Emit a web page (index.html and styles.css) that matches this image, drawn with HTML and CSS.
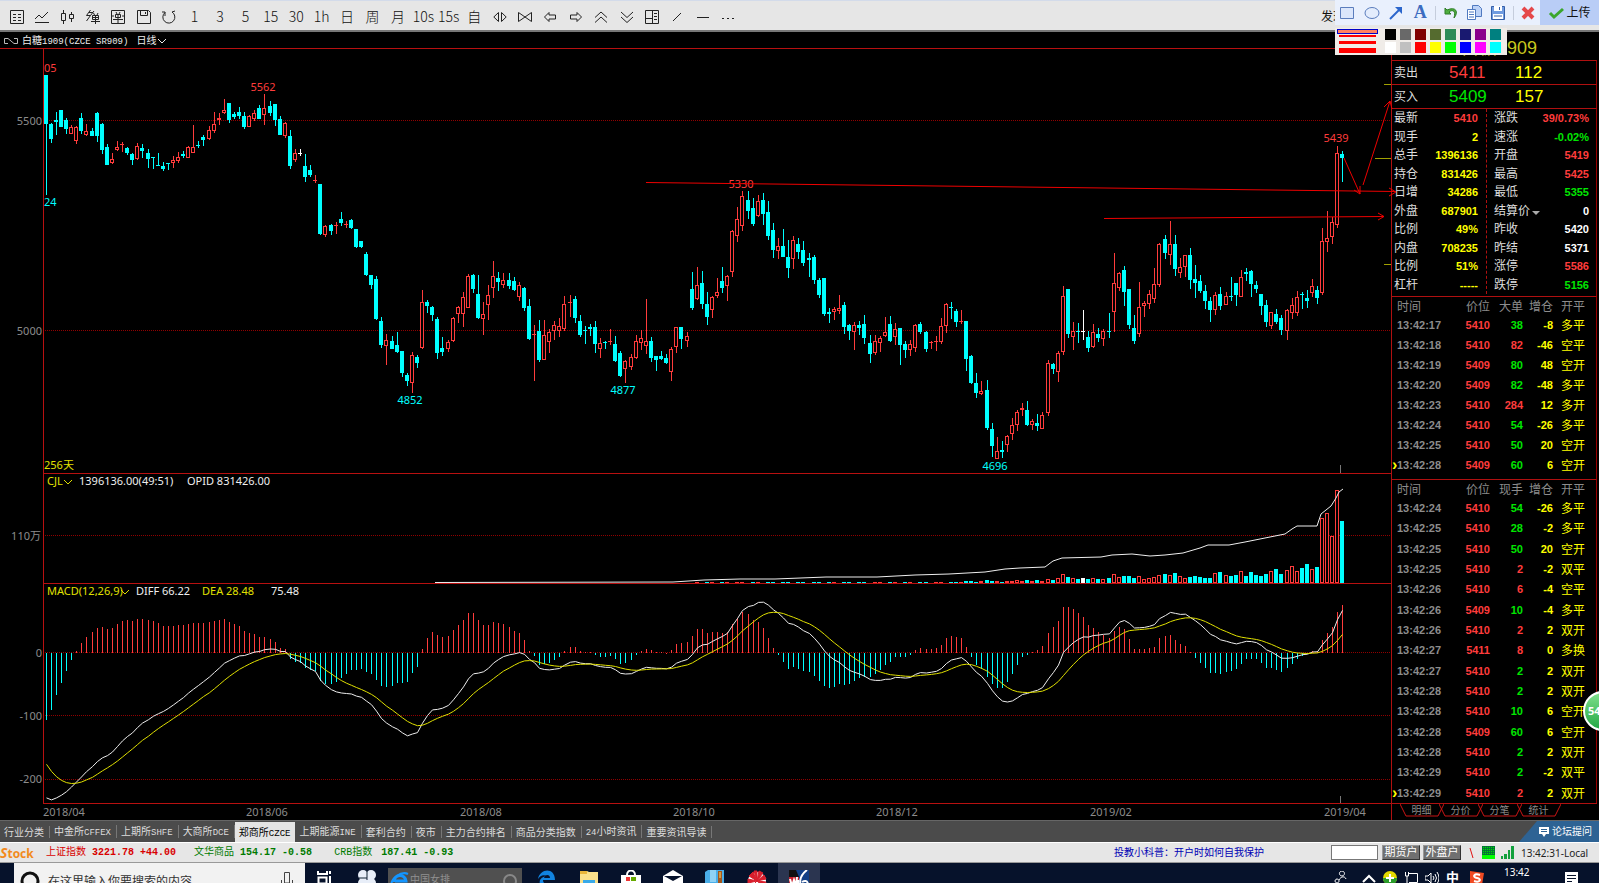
FILE: index.html
```html
<!DOCTYPE html>
<html lang="zh-CN">
<head>
<meta charset="utf-8">
<title>白糖1909 日线</title>
<link rel="stylesheet" href="styles.css">
</head>
<body>
<header class="toolbar">
  <div class="tools">
    <button aria-label="报价"><svg viewBox="0 0 14 14"><path d="M.5 .5h13v13H.5zM3 4.500h3M8 4.500h3M3 7.500h3M8 7.500h3M3 10.500h3M8 10.500h3"/></svg></button>
    <button aria-label="分时"><svg viewBox="0 0 14 14"><path d="M0 9l4-4 3 3 6-6M0 12.500h14"/></svg></button>
    <button aria-label="K线"><svg viewBox="0 0 14 14"><path d="M.5 3.500h4v7h-4zM2.500 0v3M2.500 11v3M8.500 4.500h4v4h-4zM10.500 2v2M10.500 9v3"/></svg></button>
    <button aria-label="闪单"><svg viewBox="0 0 14 14"><path d="M4.500 0L.5 5.500h4L.5 11M3 2.500h4M4.500 5.500L8 1M6.500 5.500h6v4h-6zM6.500 7.500h6M5 11.500h9M9.500 5v9M7.500 3l1 2M12 3l-1 2"/></svg></button>
    <button aria-label="下单"><svg viewBox="0 0 14 14"><path d="M.5 .5h13v13H.5zM4.500 4.500h5v3h-5zM2 9.500h10M7 4v9M5 2l1 2M9 2L8 4M0 6h3M11 6h3"/></svg></button>
    <button aria-label="保存"><svg viewBox="0 0 14 14"><path d="M.5 .5h11l2 2v11H.5zM3.500 .5v5h7v-5M8.500 2v2"/></svg></button>
    <button aria-label="刷新"><svg viewBox="0 0 14 14"><path d="M3 2.500a6 6 0 1 0 7-.5M3 6V2H0M10 2l3-1"/></svg></button>
    <button>1</button><button>3</button><button>5</button><button>15</button><button>30</button><button>1h</button>
    <button>日</button><button>周</button><button>月</button><button>10s</button><button>15s</button><button>自</button>
    <button aria-label="拉伸"><svg viewBox="0 0 14 14"><path d="M5.500 2.500v9L.8 7zM8.500 2.500v9L13.200 7z"/></svg></button>
    <button aria-label="压缩"><svg viewBox="0 0 14 14"><path d="M.5 2.500v9L7 7zM13.500 2.500v9L7 7z"/></svg></button>
    <button aria-label="左移"><svg viewBox="0 0 14 14"><path d="M1.500 7L6 2.500V5h6.500v4H6v2.500z"/></svg></button>
    <button aria-label="右移"><svg viewBox="0 0 14 14"><path d="M12.500 7L8 2.500V5H1.500v4H8v2.500z"/></svg></button>
    <button aria-label="上翻"><svg viewBox="0 0 14 14"><path d="M1 7.500L7 2l6 5.500M1 12.500L7 7l6 5.500"/></svg></button>
    <button aria-label="下翻"><svg viewBox="0 0 14 14"><path d="M1 2l6 5.500L13 2M1 7l6 5.500L13 7"/></svg></button>
    <button aria-label="布局"><svg viewBox="0 0 14 14"><path d="M.5 .5h13v13H.5zM7.500 .5v13M.5 8.500h7M9 3.500h3M9 6.500h3M9 9.500h3"/></svg></button>
    <button aria-label="斜线"><svg viewBox="0 0 14 14"><path d="M3 11l8-8"/></svg></button>
    <button aria-label="横线"><svg viewBox="0 0 14 14"><path d="M1 7.500h12"/></svg></button>
    <button aria-label="更多"><svg viewBox="0 0 14 14"><path d="M1 8.500h2M6 8.500h2M11 8.500h2"/></svg></button>
  </div>
  <a class="discover" href="#">发现</a>
</header>

<main class="workspace">
  <section class="chart">
    <div class="chart-title">
      <svg class="link-icon" viewBox="0 0 14 8"><path d="M4 1.500H.5v5H4M10 1.500h3.500v5H10M4 1.500l6 5"/></svg>
      <span>白糖<i>1909(CZCE SR909)</i></span>
      <button>日线<svg class="caret" viewBox="0 0 8 6"><path d="M0 1l4 4 4-4"/></svg></button>
    </div>
    <svg id="plot" class="plot" viewBox="0 48 1391 772" role="img" aria-label="白糖1909 日K线"></svg>
  </section>

  <aside class="quote">
    <div class="contract">白糖1909</div>
    <div class="bidask"><span>卖出</span><b class="r">5411</b><b class="y">112</b></div>
    <div class="bidask"><span>买入</span><b class="g">5409</b><b class="y">157</b></div>
    <div class="stats">
      <dl id="statsLeft"></dl>
      <dl id="statsRight"></dl>
    </div>
    <div class="ticks recent"><table class="tick-table big" id="bigTicks"></table></div>
    <div class="ticks"><table class="tick-table all" id="allTicks"></table></div>
    <nav class="quote-tabs">
      <button><svg viewBox="0 0 44 13"><path d="M0 0l6 12h32l6-12"/></svg>明细</button>
      <button><svg viewBox="0 0 44 13"><path d="M0 0l6 12h32l6-12"/></svg>分价</button>
      <button><svg viewBox="0 0 44 13"><path d="M0 0l6 12h32l6-12"/></svg>分笔</button>
      <button><svg viewBox="0 0 44 13"><path d="M0 0l6 12h32l6-12"/></svg>统计</button>
    </nav>
  </aside>
</main>

<nav class="markets">
  <a href="#">行业分类</a><a href="#">中金所<i>CFFEX</i></a><a href="#">上期所<i>SHFE</i></a><a href="#">大商所<i>DCE</i></a><a href="#" class="active">郑商所<i>CZCE</i></a><a href="#">上期能源<i>INE</i></a><a href="#">套利合约</a><a href="#">夜市</a><a href="#">主力合约排名</a><a href="#">商品分类指数</a><a href="#"><i>24</i>小时资讯</a><a href="#">重要资讯导读</a>
  <button class="forum"><svg viewBox="0 0 10 10"><path d="M0 0h10v7H7l-2 3-2-3H0z" fill="#fff"/><path d="M2 2.500h6M2 4.500h6" stroke="#2e6394"/></svg>论坛提问</button>
</nav>

<div class="status">
  <span class="brand"><em>S</em>tock</span>
  <span class="index up">上证指数 <b>3221.78</b> <b>+44.00</b></span>
  <span class="index down">文华商品 <b>154.17</b> <b>-0.58</b></span>
  <span class="index down wide"><span>CRB指数</span><b>187.41</b> <b>-0.93</b></span>
  <a class="notice" href="#">投教小科普：开户时如何自我保护</a>
  <input type="text" aria-label="合约代码">
  <button>期货户</button>
  <button>外盘户</button>
  <svg class="slash" viewBox="0 0 5 10"><path d="M1 0l3 10"/></svg>
  <svg class="board" viewBox="0 0 13 13"><path d="M0 0h13v10H0z" fill="#073"/><path d="M1 1.500h11M1 3.500h11M1 5.500h11M1 7.500h11" stroke="#0d0" stroke-dasharray="1 1"/><path d="M0 9h13v4H0z" fill="#0f0"/></svg>
  <svg class="signal" viewBox="0 0 13 13"><path d="M0 10h2v3H0zM3 8h3v5H3zM7 4h2v9H7zM10 0h3v13h-3z" fill="#12a03c"/></svg>
  <time>13:42:31-Local</time>
</div>

<footer class="taskbar">
  <div class="search">
    <svg viewBox="0 0 20 20"><circle cx="10" cy="10" r="8" fill="none" stroke="#111" stroke-width="3"/></svg>
    <label for="find">在这里输入你要搜索的内容</label>
    <input id="find" type="text">
    <svg class="mic" viewBox="0 0 12 20"><path d="M3.500 12V1.500h5V12zM.5 9v5h11V9" fill="none" stroke="#444"/></svg>
  </div>
  <div class="apps">
    <button aria-label="任务视图"><svg viewBox="0 0 20 20"><path d="M3 1v3h9V1M3.500 7.500h8v6h-8zM15 1v3M15 6v8" fill="none" stroke="#fff" stroke-width="2"/></svg></button>
    <button aria-label="花瓣"><svg viewBox="0 0 20 20"><g fill="#e8eef8"><circle cx="6" cy="5" r="5"/><circle cx="14" cy="5" r="5"/><circle cx="6" cy="13" r="5"/><circle cx="14" cy="13" r="5"/></g><path d="M10 0v8H2" fill="none" stroke="#123"/></svg></button>
    <div class="ie">
      <svg viewBox="0 0 20 20"><path d="M4 12a6 6 0 1 1 12-1H5" fill="none" stroke="#1496ff" stroke-width="3"/><path d="M2 17C-1 8 12 1 18 4" fill="none" stroke="#1496ff" stroke-width="2"/></svg>
      <span>中国女排</span>
      <svg viewBox="0 0 20 20"><circle cx="10" cy="11" r="6" fill="none" stroke="#888" stroke-width="2"/></svg>
    </div>
    <button aria-label="Edge"><svg viewBox="0 0 20 20"><path d="M1 9C3-2 18-3 18 10H6c0 5 6 6 11 3v4C8 22 1 17 3 10c2-3 5-4 7-4-4-2-7 0-9 3z" fill="#1183e0"/><path d="M7 8h6c0-4-5-4-6 0z" fill="#06122b"/></svg></button>
    <button aria-label="文件"><svg viewBox="0 0 20 20"><path d="M1 1h7l2 1h9v16H1z" fill="#fbe08a"/><path d="M1 1h7v3H1z" fill="#e9b53a"/><path d="M4 10h12v8H4z" fill="#39a9e8"/></svg></button>
    <button aria-label="商店"><svg viewBox="0 0 20 20"><path d="M6 5c0-6 8-6 8 0" fill="none" stroke="#fff" stroke-width="2"/><path d="M0 5h20v15H0z" fill="#fff"/><path d="M5 7h4v4H5z" fill="#e33"/><path d="M10 7h5v4h-5z" fill="#6a0"/></svg></button>
    <button aria-label="邮件"><svg viewBox="0 0 20 20"><path d="M0 6l10-6 10 6v12H0z" fill="#fff"/><path d="M1 6h18l-9 5z" fill="#06122b"/></svg></button>
    <button aria-label="压缩包"><svg viewBox="0 0 20 20"><path d="M0 2l3-2h16v20H0z" fill="#4aaee8"/><path d="M5 0h6v12H5z" fill="#8fd2f5"/><path d="M13 1h4v19h-4z" fill="#a5571b"/><path d="M15 2v6" stroke="#fd6"/></svg></button>
    <button aria-label="行情"><svg viewBox="0 0 20 20"><circle cx="10" cy="11" r="9" fill="#fff"/><path d="M10 11L2 6l4-4zM10 11L7 1l3 0zM10 11l2-10 4 2zM10 11l7-6 2 4zM10 11L1 9v4zM10 11l9 1-2 5zM10 11l-7 7" fill="#d81e2c" stroke="#d81e2c"/></svg></button>
    <button class="running" aria-label="wh6"><svg viewBox="0 0 20 20"><path d="M0 0h20v20H0z" fill="#123f86"/><path d="M0 0h7l3 7H0z" fill="#111"/><path d="M0 7h10v13H0z" fill="#c8202c"/><path d="M18 0c-8 6-9 16-3 16s4-8-2-4M1 9l2 7 2-6 2 6 1-9M9 10v8" fill="none" stroke="#fff" stroke-width="2"/></svg></button>
  </div>
  <div class="tray">
    <svg class="people" viewBox="0 0 14 14"><path d="M9 5a2.500 2.500 0 1 0-.1 0M4 8a2 2 0 1 0 .1 0M6 9c2-4 6-4 7-1" fill="none" stroke="#fff"/></svg>
    <svg viewBox="0 0 14 14"><path d="M1 11l6-6 6 6" fill="none" stroke="#fff" stroke-width="2"/></svg>
    <svg viewBox="0 0 14 14"><circle cx="7" cy="7" r="7" fill="#e3d900"/><path d="M0 7a7 7 0 0 0 14 0z" fill="#2a9c2a"/><path d="M7 3v8M3 7h8" stroke="#fff" stroke-width="2"/></svg>
    <svg viewBox="0 0 14 14"><path d="M5 2.500h8.500v9H5M1.500 1v4h3V1M3 5v8" fill="none" stroke="#fff"/></svg>
    <svg viewBox="0 0 14 14"><path d="M0 5h3l3-3v10l-3-3H0zM8 5q2 2 0 4M10 3q3 4 0 8M12 1q4 6 0 12" fill="none" stroke="#fff"/></svg>
    <span>中</span>
    <svg class="ime" viewBox="0 0 14 14"><path d="M0 0l14 2-2 12H0z" fill="#f04a22"/><path d="M10 4C4 2 2 6 7 7s3 5-3 3" fill="none" stroke="#fff" stroke-width="2"/></svg>
    <time>13:42</time>
    <svg class="notes" viewBox="0 0 16 16"><path d="M1 1h13v12H9l-3 3v-3H1z" fill="#fff"/><path d="M3 4.500h9M3 7.500h9M3 10.500h5" stroke="#06122b"/></svg>
  </div>
</footer>

<div class="snip">
  <div class="snip-tools">
    <button aria-label="矩形"><svg viewBox="0 0 16 16"><path d="M1.500 2.500h13v11h-13z" fill="#dbe6fb" stroke="#5b7dbd"/></svg></button>
    <button aria-label="椭圆"><svg viewBox="0 0 16 16"><ellipse cx="8" cy="8" rx="7" ry="5.500" fill="#e3ecfc" stroke="#5b7dbd"/></svg></button>
    <button aria-label="箭头"><svg viewBox="0 0 16 16"><path d="M2 14L13 3" stroke="#2c66cc" stroke-width="2"/><path d="M7 2h7v7z" fill="#2c66cc"/></svg></button>
    <button class="letter">A</button>
    <hr>
    <button aria-label="撤销"><svg viewBox="0 0 16 16"><path d="M3 3v6h6L7 7c4-3 7-1 5 6 5-6 2-12-7-8z" fill="#4fae3f" stroke="#2d7d26"/></svg></button>
    <button aria-label="复制"><svg viewBox="0 0 16 16"><path d="M6.500 .5h6l3 3v8h-9z" fill="#bcd2f7" stroke="#4f79c0"/><path d="M1.500 4.500h8v10h-8zM3 7h5M3 9.500h5M3 12h5" fill="#fff" stroke="#4f79c0"/></svg></button>
    <button aria-label="保存图片"><svg viewBox="0 0 16 16"><path d="M1.500 1.500h13v13h-13z" fill="#6f9be0" stroke="#355fa8"/><path d="M4 1h8v5H4zM3 9h10v5H3z" fill="#fff"/><path d="M4 11h8M9.500 2v3" stroke="#355fa8"/></svg></button>
    <hr>
    <button aria-label="关闭"><svg viewBox="0 0 16 16"><path d="M3 3l10 10M13 3L3 13" stroke="#e5484a" stroke-width="4"/></svg></button>
    <button class="upload"><svg viewBox="0 0 16 16"><path d="M2 8l4 4 9-8" fill="none" stroke="#3ba62d" stroke-width="3"/></svg>上传</button>
  </div>
  <div class="palette">
    <div class="weights"><button class="w1 on" aria-label="1"></button><button class="w2" aria-label="2"></button><button class="w3" aria-label="3"></button><button class="w4" aria-label="4"></button></div>
    <div class="swatches" id="swatches"></div>
  </div>
</div>
<div class="badge">54</div>
<script src="app.js"></script>
</body>
</html>
```
FILE: styles.css
```css
* { box-sizing: border-box; }
body {
  margin: 0;
  height: 100vh;
  overflow: hidden;
  position: relative;
  display: flex;
  flex-direction: column;
  background: #000;
  color: #ddd;
  font: 12px/16px "Liberation Sans", "Noto Sans CJK SC", sans-serif;
}
button { border: 0; padding: 0; background: none; color: inherit; font: inherit; }
a { color: inherit; text-decoration: none; }
svg { display: block; flex: none; }

.toolbar {
  display: flex;
  justify-content: space-between;
  align-items: center;
  flex: none;
  height: 32px;
  padding: 2px 0 0 4px;
  border-top: 1px solid #d3dbea;
  border-bottom: 2px solid #777;
  background: #e6e6e6;
  color: #111;
}
.tools { display: grid; grid-template-columns: repeat(29, 1fr); width: 737px; }
.tools button { display: flex; justify-content: center; align-items: center; height: 27px; font: 14px/27px "Noto Sans CJK SC", sans-serif; font-weight: 300; }
.tools svg { width: 14px; height: 14px; fill: none; stroke: #222; }
.discover { margin-right: 254px; }

.workspace { display: flex; flex: none; align-items: flex-start; }
.chart { flex: 1; min-width: 0; }
.chart-title { display: flex; align-items: center; gap: 4px; height: 16px; padding: 2px 0 0 4px; font-size: 10px; line-height: 14px; color: #eee; }
.chart-title i { font: 9px "Liberation Mono", monospace; }
.chart-title button { display: flex; align-items: center; gap: 2px; margin-left: 4px; }
.link-icon { width: 14px; height: 8px; fill: none; stroke: #bbb; }
.caret { width: 8px; height: 6px; fill: none; stroke: #eee; }
.plot { width: 100%; height: auto; overflow: visible; position: relative; z-index: 1; }
.plot text { font: 11px "Noto Sans", "Noto Sans CJK SC", sans-serif; }

.quote { width: 208px; height: 788px; padding-right: 2px; border-left: 1px solid #b01010; }
.contract { height: 28px; padding-right: 60px; text-align: right; font-size: 18px; line-height: 32px; color: #c8c81e; }
.bidask { display: grid; grid-template-columns: 55px 66px 1fr; align-items: center; width: 205px; height: 24px; padding-left: 2px; border-top: 1px solid #b01010; border-right: 1px solid #900; line-height: 24px; }
.bidask b { font-weight: normal; font-size: 17px; }
.r { color: #ff3c3c; }
.g { color: #00e600; }
.y { color: #ffff00; }
.w { color: #fff; }
.n { color: #8c8c8c; }
.stats { display: grid; grid-template-columns: 95px 1fr; width: 205px; height: 188px; padding-bottom: 2px; border-top: 1px solid #b01010; border-right: 1px solid #900; }
.stats dl { display: grid; grid-auto-rows: 1fr; margin: 0; padding: 0 8px 0 2px; border-right: 1px dashed #b01010; }
.stats dl + dl { padding: 0 7px; border: 0; }
.stats div { display: flex; justify-content: space-between; align-items: center; }
.stats dd { margin: 0; font-weight: bold; font-size: 11px; }
.drop { display: inline-block; margin-left: 2px; border: 4px solid transparent; border-top-color: #aaa; border-bottom: 0; }
.ticks { width: 205px; border-top: 1px solid #b01010; border-right: 1px solid #900; }
.recent { padding-bottom: 4px; }
.tick-table { width: 188px; margin-left: 5px; table-layout: fixed; border-spacing: 0; font-size: 11px; font-weight: bold; }
.big { height: 178px; }
.all { height: 323px; }
.tick-table th, .tick-table td { padding: 0; text-align: right; white-space: nowrap; line-height: 16px; }
.tick-table th { height: 18px; font: 12px/16px "Noto Sans CJK SC", sans-serif; color: #8c8c8c; }
.tick-table th:first-child, .tick-table td:first-child { width: 46px; text-align: left; position: relative; }
.tick-table th:nth-child(2) { width: 47px; }
.tick-table th:nth-child(3) { width: 33px; }
.tick-table th:nth-child(4) { width: 30px; }
.tick-table td:last-child { font: 12px/16px "Noto Sans CJK SC", sans-serif; }
.current td:first-child::before { content: "›"; position: absolute; left: -5px; color: #ff0; font-size: 16px; line-height: 15px; }
.quote-tabs { display: flex; width: 205px; padding-left: 10px; border-top: 1px solid #b01010; }
.quote-tabs button { position: relative; width: 39px; height: 14px; color: #8c8c8c; font-size: 10px; line-height: 14px; }
.quote-tabs svg { position: absolute; left: -2px; top: 0; width: 44px; height: 13px; fill: none; stroke: #c81414; }

.markets { display: flex; flex: none; height: 22px; align-items: center; border-top: 1px solid #666; background: #4b4b4b; color: #ddd; font-size: 10px; line-height: 20px; }
.markets a { padding: 1px 5px 0 4px; border-right: 1px solid #777; line-height: 11px; white-space: nowrap; }
.markets a.active { border: 0; background: #e4e4e4; color: #000; line-height: 19px; }
.markets i { font: 9px "Liberation Mono", monospace; }
.forum { display: flex; align-items: center; gap: 3px; height: 21px; margin-left: auto; padding: 0 7px 0 20px; background: #2e6394; color: #fff; clip-path: polygon(18px 0, 100% 0, 100% 100%, 0 100%); }
.forum svg { width: 10px; height: 10px; }

.status { display: flex; flex: none; align-items: center; height: 21px; padding-right: 8px; border-top: 1px solid #fff; border-bottom: 1px solid #999; background: #e6e6e6; font-size: 10px; white-space: nowrap; }
.brand { width: 46px; color: #f28a1c; font: bold 12px "Open Sans", sans-serif; }
.brand em { font-size: 14px; }
.index { font-family: "Liberation Mono", "Noto Sans CJK SC", monospace; margin-right: 18px; }
.wide { margin-left: 4px; }
.wide span { margin-right: 9px; }
.up { color: #d80000; }
.down { color: #007a00; }
.notice { margin-left: auto; margin-right: 67px; color: #0000b4; }
.status input { width: 47px; height: 15px; border: 1px solid #777; background: #fff; }
.status button { width: 38px; height: 15px; margin-left: 4px; border: 1px solid #999; border-right-color: #333; border-bottom-color: #333; background: #707070; color: #fff; font-size: 11px; line-height: 13px; }
.status button + button { margin-left: 3px; }
.slash { width: 5px; height: 10px; margin-left: 8px; stroke: #e01010; }
.board { width: 13px; height: 13px; margin-left: 8px; }
.signal { width: 13px; height: 13px; margin-left: 6px; }
.status time { width: 77px; padding-left: 7px; color: #222; font: 10px "Noto Sans", sans-serif; }

.taskbar { display: flex; flex: 1; min-height: 20px; overflow: hidden; align-items: flex-start; background: #06122b; color: #fff; }
.search { display: flex; align-items: flex-start; width: 291px; height: 40px; margin-left: 14px; padding: 8px 12px 0 6px; background: #f2f2f2; color: #333; }
.search > svg:first-child { width: 20px; height: 20px; }
.search label { padding-left: 8px; line-height: 22px; }
.search input { flex: 1; min-width: 0; height: 20px; border: 0; background: none; }
.search .mic { width: 12px; height: 20px; }
.apps { display: flex; }
.apps button, .ie { height: 40px; padding: 7px 11px 0; }
.apps button { display: flex; align-items: flex-start; }
.apps svg { width: 20px; height: 20px; }
.apps button:first-child { margin-left: -1px; }
.ie { display: flex; width: 134px; height: 35px; margin: 5px 4px 0 0; padding: 2px 2px 0; background: #505050; color: #909090; font-size: 10px; line-height: 19px; }
.ie span { flex: 1; }
.apps .running { background: #2b3550; }
.tray { display: flex; margin-left: auto; gap: 7px; padding: 8px 19px 0 0; }
.tray svg { width: 14px; height: 14px; }
.tray .people { margin-right: 8px; }
.tray .ime { margin-left: 3px; }
.tray span { width: 14px; font-size: 13px; font-weight: bold; line-height: 13px; }
.tray time { width: 46px; margin-top: -7px; padding-left: 13px; font: 10px/16px "Noto Sans", sans-serif; }
.tray .notes { width: 16px; height: 16px; margin-left: 20px; }

.snip { position: absolute; top: 0; right: 0; width: 264px; z-index: 3; }
.snip-tools { display: flex; align-items: center; height: 25px; background: #e9f0fd; }
.snip-tools button { display: flex; justify-content: center; align-items: center; width: 25px; height: 25px; }
.snip-tools svg { width: 16px; height: 16px; }
.snip-tools hr { width: 1px; height: 14px; margin: 0 2px; border: 0; background: #c5cddc; }
.snip-tools .letter { font: bold 18px "Liberation Serif", serif; color: #3c6cc0; }
.snip-tools .upload { flex: none; width: 59px; margin-left: auto; gap: 2px; background: #b9cdf6; color: #111; }
.palette { display: flex; width: 172px; height: 27px; margin-top: 3px; background: #f0ece8; }
.weights { display: flex; flex-direction: column; width: 41px; margin-left: 2px; }
.weights button { padding: 0 2px; background: red; background-clip: content-box; }
.weights .w1 { height: 5px; margin-top: 1px; padding: 1px; border: 1px solid #0000c8; background-color: #ff8060; background-clip: padding-box; }
.weights .w2 { height: 2px; margin-top: 1px; }
.weights .w3 { height: 3px; margin-top: 4px; }
.weights .w4 { height: 5px; margin-top: 4px; }
.swatches { display: grid; grid-template-columns: repeat(8, 11px); gap: 2px 4px; margin: 1px 0 0 7px; align-content: start; }
.swatches button { height: 11px; background: var(--ink); }

.badge { position: absolute; right: -24px; top: 691px; width: 40px; height: 40px; padding-left: 3px; border: 2px solid #fff; border-radius: 50%; background: linear-gradient(#7fe08c, #23a845); color: #fff; font: bold 11px/36px "Open Sans", sans-serif; z-index: 3; }
```
FILE: app.js
```js
// Candles: colour, high, low, body top, body bottom, in thirds of a pixel, per block offset.
const blocks = [
[0, `C226 585 226 374;C370 430 372 416;C336 405 361 368;C330 382 330 381;C354 402 360 388;R376 402 382 402;R378 431 381 424;C340 402 354 394;R372 408 394 407;C384 408 392 406;C336 425 338 408;C370 462 372 450;C432 495 442 495;R458 490 477 489;R424 455 440 448;R427 458 433 437;C441 465 443 458;C460 495 462 480;R430 480 439 478;C432 473 444 452;C448 506 458 477;C470 506 470 474;C460 498 494 498;C486 512 498 507;C488 510 490 494;R468 503 480 488;R455 488 472 485;C453 474 463 468;R438 475 440 472;R376 460 440 458;C422 444 434 438;C405 438 411 421;R378 420 390 418;R336 398 372 392;R340 375 355 360;R297 342 331 341;C308 368 310 360;C336 356 342 351;C322 358 336 348;C336 388 348 381;R345 382 348 380;R330 362 339 356;C316 356 324 356;R282 376 324 344;C304 348 318 340;C311 376 312 360;C348 406 356 405;R365 412 370 410;C390 507 409 500;R448 486 460 480;W448 470 459 462;C462 546 498 531;C495 530 510 525;R525 550 540 544;C551 705 552 703;R674 710 679 706;C672 705 674 692;R666 703 674 678;C636 678 656 668;R664 686 672 676;C656 685 660 684`],
[570, `C117 175 117 171;C152 174 153 171;C186 258 192 255;C255 297 256 285;C258 390 267 387;C380 473 394 465;R432 525 451 469;C438 478 452 476;C426 490 465 486;C483 560 484 551;C550 588 556 575;R485 609 495 580;C495 534 502 521;R300 476 336 473;C330 369 336 348;C348 393 350 375;C381 507 388 489;C441 498 475 486;R450 486 455 477;R381 456 384 454;R348 399 351 373;R306 411 322 373;R252 354 258 353;C252 309 254 297;C255 387 312 385;R336 435 373 387;R285 390 316 346;R213 324 259 296;C246 302 264 276`],
[510, `R309 354 331 346;C309 357 331 348;C321 363 333 360;R336 393 346 382;C352 423 354 414;C387 510 408 507;R465 632 492 496;C450 576 482 570;R450 570 495 570;R477 549 487 518;R453 510 466 483;R444 501 469 483;R379 483 403 477;R375 441 396 399;C379 460 387 444;C435 502 453 495;C468 522 479 483;C462 498 471 476;C453 550 471 522;R504 564 519 537;C513 538 515 519;R477 525 512 516;C498 576 522 573;C543 620 550 620;R570 639 573 597;R552 600 561 590;R495 567 513 563;R479 540 504 518;R387 552 513 528;C501 576 513 564;C558 603 558 570;C543 570 559 567;C552 581 564 580;R531 634 538 608;R471 550 472 533;C471 537 472 507;R486 531 499 514;C306 420 357 414;R291 390 346 389;C303 417 339 402;C366 466 402 441;R378 445 381 419;R324 384 367 380;C291 369 333 354;R315 393 319 350;R180 320 184 308;R111 216 148 198;R64 183 78 167;C64 147 90 123;C84 167 115 162;R75 142 94 140;C69 165 90 132;C94 210 126 198;C160 264 180 240;R204 267 228 242;C178 262 228 261;C210 324 261 294;R198 297 210 266;C204 267 222 246;C213 288 240 278;C249 321 265 270;C255 342 261 330;C324 384 330 375;C324 437 324 432;C414 459 426 432;R411 450 417 426;R375 432 414 422;C396 492 405 471;C462 510 465 483;R456 540 465 486;C453 495 465 474;C435 522 462 504;C495 579 519 552;R495 555 514 550;R498 547 504 518;R441 501 486 498;C438 516 462 514;R459 525 477 501;C474 585 474 525;C513 563 522 540;R510 558 522 540;R462 546 465 533;C456 492 462 486;C483 545 486 537;R513 537 515 519;R498 543 513 516;R444 522 468 515;R399 489 402 467;C396 447 410 414;C417 471 423 456;R420 462 452 456;C453 603 453 567;C555 642 558 639;C609 685 640 669;R633 675 663 671;C630 780 660 774;C759 861 777 828;R801 868 843 867;C813 864 840 846;R795 846 798 825;R744 810 766 792;R720 783 726 765;R699 738 715 722;C693 768 720 766;R747 780 753 765;C732 783 759 768;R726 777 735 776;R570 737 580 731;C579 612 583 598;R543 636 549 605;R348 555 378 546;C357 504 357 492;R456 540 483 500;C459 519 483 487;W420 510 483 486;C483 546 500 534;R462 533 486 531;C474 516 492 504;R477 528 484 507;C429 504 482 486;R249 486 339 426;R306 362 309 353;C288 408 300 366;C357 477 357 465;C435 522 474 514;R336 501 411 491;R393 441 398 407;R360 417 373 404;R294 399 343 389;R219 350 222 344;C195 267 207 249;R153 285 222 254;C195 318 222 297;R264 324 291 308;R255 320 256 293;C234 357 255 330;C285 384 327 339;C315 369 333 363;C345 417 363 393;C381 456 393 420;R366 435 375 419;C351 420 372 408;R366 405 378 404;C321 393 378 381;C339 408 340 377;R300 381 321 380;C294 333 306 312;C300 381 303 342;C333 370 345 357;C372 435 373 408;C390 471 405 456;R426 477 426 467;C417 462 432 456;C435 495 444 480;R417 510 421 483;R384 447 405 429;R363 438 381 430;C366 417 372 376;C360 414 383 392;R327 381 347 367;C348 402 360 384;R174 374 213 369;R123 246 205 218;R140 222 157 203;R-72 174 -50 165;C-57 36 -48 -36`]
];
const candles = blocks.flatMap(([off, text]) => text.split(';').map(s => {
  const [hi, lo, top, bot] = s.slice(1).split(' ').map(v => (Number(v) + off) / 3);
  return { c: s[0], hi, lo, top, bot };
}));
const ink = { C: '#00ffff', R: '#ff3c3c', W: '#ffffff' };
const xAt = i => Math.floor(46.3 + 5.085 * i);
const out = [];
const rect = (x, y, w, h, fill) => out.push(`<rect x="${x}" y="${Math.round(y)}" width="${w}" height="${Math.max(1, Math.round(h))}" fill="${fill}"/>`);
const line = (d, stroke, extra = '') => out.push(`<path d="${d}" fill="none" stroke="${stroke}" ${extra}/>`);
const text = (x, y, s, fill, anchor = 'start') => out.push(`<text x="${x}" y="${y}" fill="${fill}" text-anchor="${anchor}">${s}</text>`);
const box = (x, y, h) => h < 2.5 ? rect(x - 2, y, 4, h, ink.R)
  : out.push(`<rect x="${x - 1.5}" y="${Math.round(y) + .5}" width="3" height="${Math.round(h) - 1}" fill="#000" stroke="${ink.R}"/>`);

out.push('<g shape-rendering="crispEdges">');
[120, 330, 535, 652, 715, 779].forEach(y => line(`M45 ${y}.5H1391`, '#900000', 'stroke-dasharray="1 1"'));
line('M0 48.500H1391M43.500 48V803M43 473.500H1391M43 583.500H1391M43 803.500H1391', '#b81010');
line('M1340.500 465v8M1340.500 796v7', '#777');
line('M1384 84.500h7M1375 158.500h16M1384 264.500h7', '#a0a000');
candles.forEach((k, i) => {
  const x = xAt(i);
  rect(x, k.hi, 1, k.lo - k.hi, ink[k.c]);
  if (k.c === 'R') box(x, k.top, k.bot - k.top);
  else rect(x - 2, k.top, 4, k.bot - k.top, ink[k.c]);
});
const vols = '1 2 2 1 2 3 2 2 1 2 2 3 2 3 2 3 2 4 3 5 9 6 5 4 5 4 5 4 4 5 9 6 7 7 5 7 4 5 6 8 9 8 10 7 5 6 7 6 5 5 10 11 8 7 8 12 7 11 8 7 9 12 14 9 13 17 12 15 19 14 16 65 70 47 93 62'.split(' ').map(Number);
for (let i = 128; i < 180; i++) if (i % 3) rect(xAt(i) - 2, 582, 4, 1, ink[candles[i].c]);
vols.forEach((v, n) => {
  const i = n + 180, k = candles[i];
  if (k.c === 'R') box(xAt(i), 583 - v, v); else rect(xAt(i) - 2, 583 - v, 4, v, ink[k.c]);
});

const closes = candles.map(k => 5500 - ((k.c === 'R' ? k.top : k.bot) - 120.5) * 2.378);
let fast = closes[0] + 219, slow = closes[0] + 448, dea = -176;
const diffs = [], deas = [];
closes.forEach((c, i) => {
  if (i) {
    fast += (c - fast) * 2 / 13;
    slow += (c - slow) * 2 / 27;
    dea += (fast - slow - dea) * .2;
  }
  diffs.push(fast - slow);
  deas.push(dea);
});
diffs.forEach((d, i) => {
  const h = (d - deas[i]) * 2 * .635;
  rect(xAt(i), h > 0 ? 653 - h : 653, 1, Math.abs(h), h > 0 ? ink.R : ink.C);
});
out.push('</g>');
const curve = list => 'M' + list.map((v, i) => `${xAt(i) + .5} ${(652.5 - v * .635).toFixed(1)}`).join('L');
line(curve(diffs), '#eee');
line(curve(deas), '#e0e000');
line('M435 582.500L673 582 704 580 740 579 775 579 826 577 877 577 915 575 949 574 985 572 1005 569 1020 568 1045 567 1053 561 1062 558 1101 557 1112 555 1132 554 1150 556 1165 555 1183 553 1200 548 1208 545 1229 545 1245 542 1265 538 1285 534 1292 529 1297 526 1317 526 1321 514 1326 510 1331 506 1336 498 1339 492 1343 489', '#eee');

text(42, 125, '5500', '#8c8c8c', 'end');
text(42, 335, '5000', '#8c8c8c', 'end');
text(41, 540, '110万', '#8c8c8c', 'end');
text(42, 657, '0', '#8c8c8c', 'end');
text(42, 720, '-100', '#8c8c8c', 'end');
text(42, 783, '-200', '#8c8c8c', 'end');
text(44, 72, '05', ink.R);
text(44, 206, '24', ink.C);
text(263, 91, '5562', ink.R, 'middle');
text(741, 188, '5330', ink.R, 'middle');
text(1336, 142, '5439', ink.R, 'middle');
text(410, 404, '4852', ink.C, 'middle');
text(623, 394, '4877', ink.C, 'middle');
text(995, 470, '4696', ink.C, 'middle');
text(44, 469, '256天', '#e0e000');
text(47, 485, 'CJL', '#e0e000');
text(79, 485, '1396136.00(49:51)', '#eee');
text(187, 485, 'OPID 831426.00', '#eee');
text(47, 595, 'MACD(12,26,9)', '#e0e000');
text(136, 595, 'DIFF 66.22', '#eee');
text(202, 595, 'DEA 28.48', '#e0e000');
text(271, 595, '75.48', '#eee');
line('M64 480l4 4 4-4M121 590l4 4 4-4', '#e0e000');
[[43, '2018/04'], [246, '2018/06'], [460, '2018/08'], [673, '2018/10'], [876, '2018/12'], [1090, '2019/02'], [1324, '2019/04']]
  .forEach(([x, s]) => text(x, 816, s, '#8c8c8c'));
line('M646 182.500L1396 191.500M1389 188l7 4-7 4M1104 218.500L1384 216.500M1378 213l6 3.500-6 3.500M1344 158L1360 194M1354 190l6 4v-8M1363 185L1390 101M1384 107l6-6 2 8', '#ee0000');
document.getElementById('plot').innerHTML = out.join('');

const stat = (id, rows) => {
  document.getElementById(id).innerHTML = rows.map(([k, v, c]) =>
    `<div><dt>${k}</dt><dd class="${c}">${v}</dd></div>`).join('');
};
stat('statsLeft', [['最新', 5410, 'r'], ['现手', 2, 'y'], ['总手', 1396136, 'y'], ['持仓', 831426, 'y'], ['日增', 34286, 'y'], ['外盘', 687901, 'y'], ['比例', '49%', 'y'], ['内盘', 708235, 'y'], ['比例', '51%', 'y'], ['杠杆', '-----', 'y']]);
stat('statsRight', [['涨跌', '39/0.73%', 'r'], ['速涨', '-0.02%', 'g'], ['开盘', 5419, 'r'], ['最高', 5425, 'r'], ['最低', 5355, 'g'], ['结算价<i class="drop"></i>', 0, 'w'], ['昨收', 5420, 'w'], ['昨结', 5371, 'w'], ['涨停', 5586, 'r'], ['跌停', 5156, 'g']]);

const ticks = (id, heads, rows) => {
  const body = rows.split(';').map((s, n, all) => {
    const [t, p, c, v, d, k] = s.split(' ');
    return `<tr class="${n === all.length - 1 ? 'current' : ''}"><td class="n">13:42:${t}</td><td class="r">${p}</td><td class="${c}">${v}</td><td class="y">${d}</td><td class="y">${k}</td></tr>`;
  }).join('');
  document.getElementById(id).innerHTML = `<thead><tr>${heads.map(h => `<th>${h}</th>`).join('')}</tr></thead><tbody>${body}</tbody>`;
};
ticks('bigTicks', ['时间', '价位', '大单', '增仓', '开平'], '17 5410 g 38 -8 多平;18 5410 r 82 -46 空平;19 5409 g 80 48 空开;20 5409 g 82 -48 多平;23 5410 r 284 12 多开;24 5410 g 54 -26 多平;25 5410 g 50 20 空开;28 5409 g 60 6 空开');
ticks('allTicks', ['时间', '价位', '现手', '增仓', '开平'], '24 5410 g 54 -26 多平;25 5410 g 28 -2 多平;25 5410 g 50 20 空开;25 5410 r 2 -2 双平;26 5410 r 6 -4 空平;26 5409 g 10 -4 多平;26 5410 r 2 2 双开;27 5411 r 8 0 多换;27 5410 g 2 2 双开;28 5410 g 2 2 双开;28 5410 g 10 6 空开;28 5409 g 60 6 空开;28 5410 g 2 2 双开;29 5410 g 2 -2 双平;29 5410 r 2 2 双开');

document.getElementById('swatches').innerHTML = ['#000', '#696969', '#800000', '#556b2f', '#2e8b57', '#191970', '#8b008b', '#008080', '#fff', '#c0c0c0', '#f00', '#ff0', '#0f0', '#00f', '#f0f', '#0ff']
  .map(c => `<button style="--ink:${c}" aria-label="${c}"></button>`).join('');
```
